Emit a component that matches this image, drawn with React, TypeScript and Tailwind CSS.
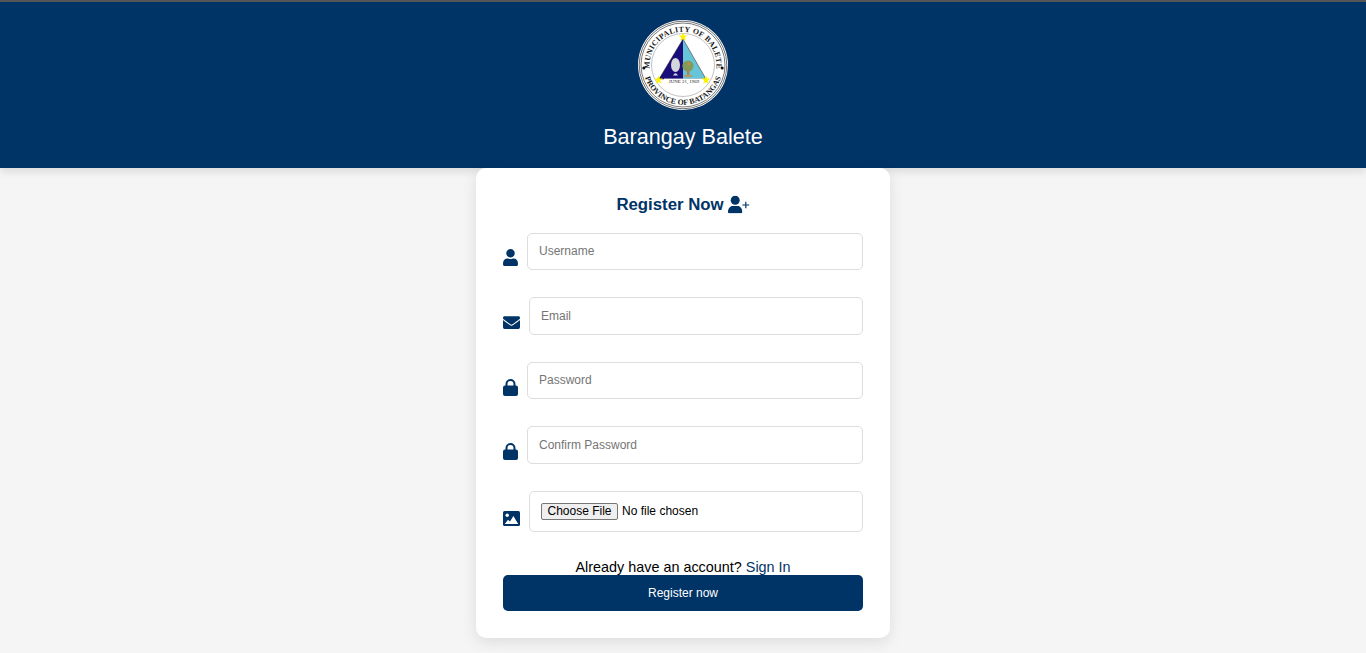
import { FaEnvelope, FaUser } from "react-icons/fa";

function Star({ x, y }: { x: number; y: number }) {
  return (
    <polygon
      transform={`translate(${x} ${y})`}
      points="0,-4.6 1.2,-1.4 4.5,-1.4 1.8,0.6 2.8,3.8 0,1.9 -2.8,3.8 -1.8,0.6 -4.5,-1.4 -1.2,-1.4"
      fill="#fff200"
    />
  );
}

function Logo() {
  return (
    <svg viewBox="0 0 90 90" className="w-[90px] h-[90px] block" aria-label="Seal">
      <defs>
        <path id="top" d="M 12 51 A 33.5 33.5 0 1 1 78 51" />
        <path id="bottom" d="M 6.4 55.4 A 40 40 0 0 0 83.6 55.4" />
      </defs>
      <circle cx="45" cy="45" r="45" fill="#ffffff" />
      <circle cx="45" cy="45" r="43.8" fill="none" stroke="#333" strokeWidth="0.7" />
      <circle cx="45" cy="45" r="42" fill="none" stroke="#222" strokeWidth="0.6" />
      <circle cx="45" cy="45" r="31.5" fill="none" stroke="#666" strokeWidth="0.4" />
      <text fontFamily="Liberation Serif, serif" fontSize="7.8" fontWeight="700" fill="#1a1a1a" textLength="112" lengthAdjust="spacing">
        <textPath href="#top" startOffset="2%">MUNICIPALITY OF BALETE</textPath>
      </text>
      <text fontFamily="Liberation Serif, serif" fontSize="7.8" fontWeight="700" fill="#1a1a1a" textLength="100" lengthAdjust="spacing">
        <textPath href="#bottom" startOffset="2%">PROVINCE OF BATANGAS</textPath>
      </text>
      <circle cx="5.8" cy="48" r="1.5" fill="#111" />
      <circle cx="84.2" cy="48" r="1.5" fill="#111" />
      <polygon points="45,19 45,59 21,59" fill="#1a0f7a" />
      <polygon points="45,19 68,59 45,59" fill="#66c5d8" />
      <path d="M45 19 L21 59 H68 Z" fill="none" stroke="#222" strokeWidth="0.5" />
      <ellipse cx="37.5" cy="45" rx="4.5" ry="7" fill="#d5d5dc" />
      <path d="M35 55.5 Q37.5 51 40 55.5 Z" fill="#d5d5dc" />
      <circle cx="50" cy="46" r="5.6" fill="#7f9c58" />
      <circle cx="51" cy="44" r="2" fill="#a79455" />
      <rect x="49" y="49" width="2.4" height="6.5" fill="#a8845a" />
      <ellipse cx="50" cy="56" rx="4.5" ry="1.2" fill="#b59a6c" />
      <rect x="26" y="58.6" width="40" height="5" fill="#ffffff" />
      <text x="46" y="63" textAnchor="middle" fontFamily="Liberation Serif, serif" fontSize="4.9" fill="#222">JUNE 21, 1969</text>
      <Star x={45} y={17} />
      <Star x={20.5} y={60} />
      <Star x={68} y={60} />
    </svg>
  );
}

function UserPlus() {
  return (
    <svg viewBox="0 0 22 18" className="w-[22px] h-[18px] block -translate-y-[0.5px]" fill="#003366">
      <circle cx="7.2" cy="4.7" r="4.5" />
      <path d="M0 16.6c0-3.6 2.2-6 4.6-6h5.2c2.4 0 4.4 2.4 4.4 6 0 .8-.5 1.2-1 1.2H1c-.5 0-1-.4-1-1.2z" />
      <path d="M17.2 6.2h1.2v2.7h2.8v1.2h-2.8v2.7h-1.2v-2.7h-2.8V8.9h2.8z" />
    </svg>
  );
}

function ImageIcon() {
  return (
    <svg viewBox="0 0 17 15" className="mt-[20px] w-[17px] h-[15px] block shrink-0">
      <rect x="0" y="0" width="17" height="15" rx="1.6" fill="#003366" />
      <circle cx="4.2" cy="4.2" r="1.7" fill="#ffffff" />
      <path d="M1.8 13 L5 8.8 L7 10.6 L10.4 5 L15.2 13 Z" fill="#ffffff" />
    </svg>
  );
}

function LockIcon() {
  return (
    <svg viewBox="0 0 15 17" className="mt-[17px] w-[15px] h-[17px] block shrink-0">
      <rect x="0" y="6.6" width="15" height="10.4" rx="2" fill="#003366" />
      <path d="M3.5 7.5V5a4 4 0 0 1 8 0v2.5" fill="none" stroke="#003366" strokeWidth="2" />
    </svg>
  );
}

const inputClass =
  "flex-1 min-w-0 h-[37.5px] border border-[#dddddd] rounded-[5px] px-[11px] text-xs bg-white placeholder:text-[#757575] outline-none";

export default function App() {
  return (
    <div className="bg-[#f5f5f5] font-['Liberation_Sans',Arial,sans-serif] overflow-hidden h-[653px]">
      <header className="h-[168px] bg-[#003366] border-t-2 border-t-[#555555] shadow-[0_4px_8px_rgba(0,0,0,0.1)] flex flex-col items-center pt-[18px]">
        <Logo />
        <h1 className="mt-[12px] text-[21.6px] leading-[30px] text-white">Barangay Balete</h1>
      </header>
      <main className="relative mx-auto w-[414px] h-[470px] bg-white rounded-[10px] shadow-[0_4px_15px_rgba(0,0,0,0.1)] px-[27px] pt-[25px]">
        <h2 className="flex items-center justify-center gap-[4px] text-[16.8px] leading-[24px] font-bold text-[#003366] h-[24px]">
          Register Now <UserPlus />
        </h2>
        <div className="mt-[15.7px] flex flex-col">
          <div className="flex items-start gap-[9px] h-[64.5px]">
            <FaUser className="mt-[16px] w-[15px] h-[17px] text-[#003366] shrink-0" />
            <input className={inputClass} placeholder="Username" />
          </div>
          <div className="flex items-start gap-[9px] h-[64.5px]">
            <FaEnvelope className="mt-[17px] w-[17px] h-[17px] text-[#003366] shrink-0" />
            <input className={inputClass} placeholder="Email" />
          </div>
          <div className="flex items-start gap-[9px] h-[64.5px]">
            <LockIcon />
            <input className={inputClass} placeholder="Password" type="password" />
          </div>
          <div className="flex items-start gap-[9px] h-[64.5px]">
            <LockIcon />
            <input className={inputClass} placeholder="Confirm Password" type="password" />
          </div>
          <div className="flex items-start gap-[9px]">
            <ImageIcon />
            <input
              type="file"
              className="flex-1 min-w-0 h-[41px] border border-[#dddddd] rounded-[5px] px-[11px] pt-[11px] pb-[9px] text-xs leading-[15px] text-black bg-white file:bg-[#efefef] file:border file:border-[#767676] file:rounded-[2px] file:px-[5.5px] file:py-0 file:mr-1 file:text-black"
            />
          </div>
        </div>
        <p className="mt-[27px] text-center text-[14.4px] leading-[16px] text-black">
          Already have an account? <a className="text-[#003366]">Sign In</a>
        </p>
        <button className="block w-full h-[36px] bg-[#003366] rounded-[5px] text-white text-xs font-medium">
          Register now
        </button>
      </main>
    </div>
  );
}
